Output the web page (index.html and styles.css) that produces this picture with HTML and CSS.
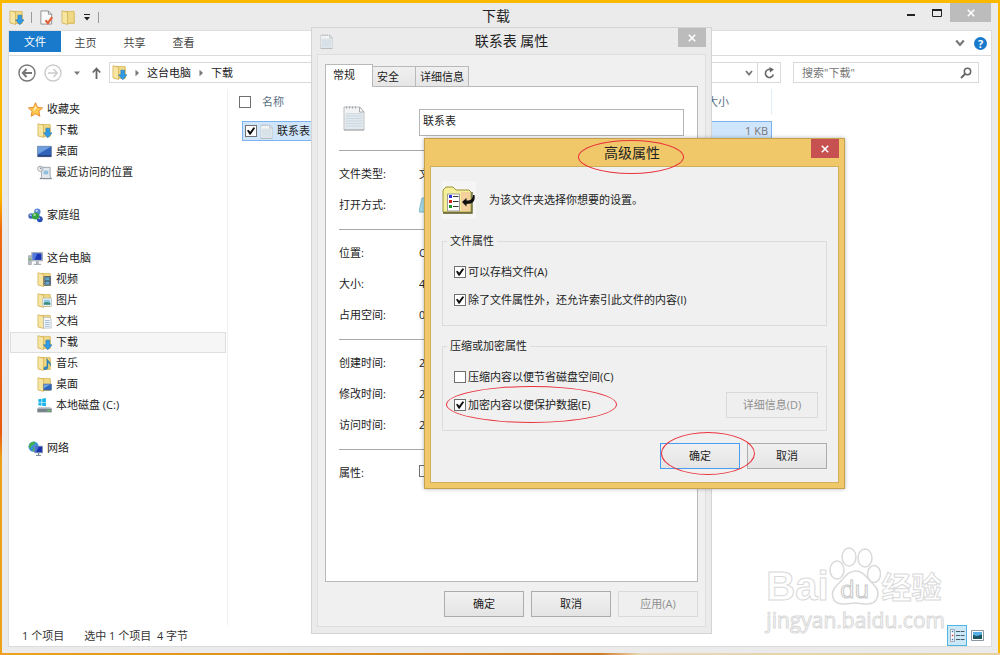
FILE: index.html
```html
<!DOCTYPE html>
<html lang="zh-CN">
<head>
  <meta charset="UTF-8">
  <meta name="viewport" content="width=device-width, initial-scale=1.0">
  <title>下载</title>
  <link rel="stylesheet" href="styles.css">
</head>
<body>

  <!-- Icons -->
  <svg class="icon-defs" width="0" height="0" aria-hidden="true">
    <symbol id="i-folder" viewBox="0 0 16 16">
      <path d="M1 1.500l5-.8v2h8.500v12H3L1 13.500z" fill="#e3c362"/>
      <path d="M6 1.500h8v12.500H6z" fill="#f0d985" stroke="#d0ae4c" stroke-width=".7"/>
      <path d="M1 .8l6 1.500v13.200l-6-1.800z" fill="#f7e5a2" stroke="#cda84a" stroke-width=".7"/>
    </symbol>
    <symbol id="i-download" viewBox="0 0 16 16">
      <use href="#i-folder"/>
      <path d="M9.500 5.500h4v5H16L11.500 15.800 7 10.500h2.500z" fill="#2f9be6" stroke="#1c6fb5" stroke-width=".6"/>
    </symbol>
    <symbol id="i-star" viewBox="0 0 16 16">
      <path d="M8 .8l2.200 4.900 5.300.6-3.900 3.600 1.100 5.300L8 12.500l-4.700 2.700 1.100-5.300L.5 6.300l5.300-.6z" fill="#ffc84d" stroke="#e8842a"/>
      <path d="M8 3l1.400 3.600L5 11z" fill="#ffe9a8"/>
    </symbol>
    <symbol id="i-desktop" viewBox="0 0 16 16">
      <path d="M.5 2.500h15v11H.5z" fill="#2f62b8" stroke="#7a8ca8"/>
      <path d="M1 3h14L1 11z" fill="#6c9ee0"/>
      <path d="M1 12h14v1.500H1z" fill="#1f3a70"/>
    </symbol>
    <symbol id="i-recent" viewBox="0 0 16 16">
      <path d="M4 2.500h10v9.500l1.500 2.500H3.500L5 12z" fill="#e4e8ec" stroke="#9aa2aa"/>
      <path d="M7 6h5v4H7z" fill="#8fc0de"/>
      <path d="M3 14.500h12.500" stroke="#7e868e"/>
      <circle cx="3.500" cy="4" r="2.800" fill="#f4f6f8" stroke="#9aa2aa"/>
      <path d="M3.500 2.300V4H5" fill="none" stroke="#5a6a7a" stroke-width=".8"/>
    </symbol>
    <symbol id="i-homegroup" viewBox="0 0 16 16">
      <path d="M3.500 8L10 4l3 7z" fill="none" stroke="#7d9ab8" stroke-width="1.500"/>
      <circle cx="10" cy="4" r="3.400" fill="#5a86d4"/>
      <circle cx="3.300" cy="8.500" r="3" fill="#3f68bd"/>
      <circle cx="12.600" cy="12" r="3.100" fill="#2a4eb4"/>
      <circle cx="8" cy="8.500" r="3.800" fill="#35a342"/>
      <circle cx="9.300" cy="3" r="1.200" fill="#c4dcf8"/>
      <circle cx="7" cy="7.200" r="1.300" fill="#a6e0a2"/>
      <circle cx="2.800" cy="7.600" r="1" fill="#b4d0f4"/>
      <circle cx="12" cy="11" r="1" fill="#9ab8ec"/>
    </symbol>
    <symbol id="i-pc" viewBox="0 0 16 16">
      <path d="M.5 5h3v9.500h-3z" fill="#b8bec4" stroke="#868e96" stroke-width=".6"/>
      <path d="M1 8h2v2H1z" fill="#5db653"/>
      <path d="M4 1.500h11.500v9H4z" fill="#c9d2da" stroke="#8f99a3" stroke-width=".8"/>
      <path d="M5 2.500h9.500v7H5z" fill="#1a36b4"/>
      <path d="M5 2.500h5L7 9.500H5z" fill="#5078e0"/>
      <path d="M8.500 11h3v2.500H14v1.500H6v-1.500h2.500z" fill="#a9b1b9"/>
    </symbol>
    <symbol id="i-video" viewBox="0 0 16 16">
      <use href="#i-folder"/>
      <path d="M7 4.500h8v10H7z" fill="#3d4852"/>
      <path d="M8.800 5.500h4.400v3.500H8.800zM8.800 10h4.400v3.500H8.800z" fill="#5fa6cc"/>
      <path d="M7.900 5v9.500M14.100 5v9.500" stroke="#d8dee2" stroke-width=".8" stroke-dasharray="1 1"/>
    </symbol>
    <symbol id="i-picture" viewBox="0 0 16 16">
      <use href="#i-folder"/>
      <path d="M6 5.500h9.500v8.500H6z" fill="#fff" stroke="#a5adb5" stroke-width=".7"/>
      <path d="M7.200 7h7v5.500h-7z" fill="#8cc7e6"/>
      <path d="M7.200 10.500l3-1 4 1v2h-7z" fill="#3c8a78"/>
    </symbol>
    <symbol id="i-document" viewBox="0 0 16 16">
      <use href="#i-folder"/>
      <path d="M7 3.500h6l2 2v9.500H7z" fill="#f7f9fb" stroke="#a5adb5" stroke-width=".7"/>
      <path d="M8.500 7h5M8.500 9h5M8.500 11h5M8.500 13h5" stroke="#84abd0" stroke-width=".8"/>
    </symbol>
    <symbol id="i-music" viewBox="0 0 16 16">
      <use href="#i-folder"/>
      <path d="M10.500 2.500c.5 3 4.500 3 4 8-.6-2-1.500-3-2.800-3.300V12c0 3-4.500 3.500-4.500 1.300 0-1.600 2-2.300 3.300-1.800z" fill="#2e8bc6" stroke="#1d6594" stroke-width=".4"/>
    </symbol>
    <symbol id="i-desk-folder" viewBox="0 0 16 16">
      <use href="#i-folder"/>
      <path d="M7 7.500h8.500v6.500H7z" fill="#2c63bc" stroke="#64788f" stroke-width=".7"/>
      <path d="M7.400 8h7l-7 4z" fill="#75a5e4"/>
    </symbol>
    <symbol id="i-disk" viewBox="0 0 16 16">
      <path d="M1.500 1.300L4.800.8v3.400H1.500zM5.500.7L9.500 0v4.200h-4zM1.500 4.900h3.300v3.400l-3.300-.5zM5.500 4.900h4v4l-4-.6z" fill="#18b4e8"/>
      <path d="M2 9.500h12l1.700 2H.3z" fill="#c4cad0"/>
      <path d="M.3 11.300h15.400v4H.3z" fill="#78828b"/>
      <path d="M11 12.700h3v1.400h-3z" fill="#5fd25a"/>
    </symbol>
    <symbol id="i-network" viewBox="0 0 16 16">
      <circle cx="6" cy="6" r="5.500" fill="#3c8fd6"/>
      <path d="M2 2.500c2-2 5-2 6-1.500L6 4 3.500 5 3 8 .7 6.500zM5.500 7L8 8v3l-3 0z" fill="#45b04c"/>
      <path d="M7 5.500h8.500v7H7z" fill="#1b33aa" stroke="#8e9cb0" stroke-width=".8"/>
      <path d="M7.500 6h4L8.500 12h-1z" fill="#4a74da"/>
      <path d="M10.500 12.800h1.500V15h2v1H8.500v-1h2z" fill="#7e8a98"/>
    </symbol>
    <symbol id="i-note" viewBox="0 0 22 26">
      <path d="M1 2h15.500L21 7v18H1z" fill="#f2f3f4" stroke="#b5b8ba" stroke-width=".9"/>
      <path d="M2 9h18v15H2z" fill="#dfe9ef"/>
      <path d="M3 8.500h16M3 11h16M3 13.500h16M3 16h16M3 18.500h16M3 21h16" stroke="#c4d0d7" stroke-width=".7"/>
      <path d="M3 2.500h12" stroke="#9da2a5" stroke-width="2.200" stroke-dasharray="1 2"/>
      <path d="M16.500 2v5H21z" fill="#fff" stroke="#9ca1a4" stroke-width=".9"/>
      <path d="M1 25h20" stroke="#a5a9ab"/>
    </symbol>
    <symbol id="i-check-doc" viewBox="0 0 14 16">
      <path d="M1 1h8l3.500 3.500V15H1z" fill="#fafafa" stroke="#8f8f8f"/>
      <path d="M9 1v3.500h3.500" fill="none" stroke="#8f8f8f"/>
      <path d="M6 11l2.500 3L13 7.500" fill="none" stroke="#e2633a" stroke-width="2.400"/>
    </symbol>
    <symbol id="i-close" viewBox="0 0 8 8">
      <path d="M.8.8l6.400 6.400M7.200.8L.8 7.200" stroke="currentColor" stroke-width="1.600"/>
    </symbol>
    <symbol id="i-chevron" viewBox="0 0 8 8">
      <path d="M1 2l3 3.500L7 2" fill="none" stroke="currentColor" stroke-width="1.800"/>
    </symbol>
    <symbol id="i-caret" viewBox="0 0 8 8">
      <path d="M1 2.500h6L4 6z" fill="currentColor"/>
    </symbol>
    <symbol id="i-crumb" viewBox="0 0 8 8">
      <path d="M2.500.8v6.400L6 4z" fill="currentColor"/>
    </symbol>
  </svg>

  <!-- Explorer Window -->
  <main class="window">
    <header class="titlebar">
      <div class="quick-access">
        <svg class="icon"><use href="#i-download"/></svg>
        <span class="separator"></span>
        <button class="tool" aria-label="属性"><svg class="icon"><use href="#i-check-doc"/></svg></button>
        <button class="tool" aria-label="新建文件夹"><svg class="icon"><use href="#i-folder"/></svg></button>
        <button class="tool" aria-label="自定义">
          <svg width="8" height="9" viewBox="0 0 8 9"><path d="M1 1.500h6" stroke="#222"/><path d="M1 4h6L4 7.500z" fill="#222"/></svg>
        </button>
        <span class="separator"></span>
      </div>
      <h1 class="window-title">下载</h1>
      <div class="window-buttons">
        <button class="min-max" aria-label="最小化"><svg width="10" height="10"><path d="M1 7h8" stroke="#222" stroke-width="2"/></svg></button>
        <button class="min-max" aria-label="最大化"><svg width="10" height="10"><path d="M.5 1.500h9v7h-9z" fill="none" stroke="#222"/><path d="M0 2h10" stroke="#222" stroke-width="2"/></svg></button>
        <button class="close close-wide" aria-label="关闭"><svg width="8" height="8"><use href="#i-close"/></svg></button>
      </div>
    </header>

    <div class="client">
      <nav class="ribbon">
        <button class="file-tab">文件</button>
        <button class="ribbon-tab">主页</button>
        <button class="ribbon-tab">共享</button>
        <button class="ribbon-tab">查看</button>
        <div class="ribbon-right">
          <button class="tool" aria-label="展开功能区"><svg width="10" height="10"><use href="#i-chevron"/></svg></button>
          <button class="help" aria-label="帮助">?</button>
        </div>
      </nav>

      <div class="toolbar">
        <button class="tool round" aria-label="后退">
          <svg width="18" height="18" viewBox="0 0 18 18" fill="none" stroke="#777"><circle cx="9" cy="9" r="8" stroke-width="1.400"/><path d="M14 9H5M8.500 5L4.800 9l3.700 4" stroke-width="2"/></svg>
        </button>
        <button class="tool round" aria-label="前进">
          <svg width="18" height="18" viewBox="0 0 18 18" fill="none" stroke="#ccc"><circle cx="9" cy="9" r="8" stroke-width="1.400"/><path d="M4 9h9M9.500 5l3.700 4-3.700 4" stroke-width="1.600"/></svg>
        </button>
        <button class="tool history" aria-label="历史记录"><svg width="8" height="8"><use href="#i-caret"/></svg></button>
        <button class="tool" aria-label="向上">
          <svg width="9" height="12" viewBox="0 0 9 12" fill="none" stroke="#666" stroke-width="1.800"><path d="M4.500 12V2M.8 5.500l3.700-4 3.700 4"/></svg>
        </button>
        <div class="address">
          <svg class="icon"><use href="#i-download"/></svg>
          <svg class="crumb-arrow"><use href="#i-crumb"/></svg>
          <a href="#">这台电脑</a>
          <svg class="crumb-arrow"><use href="#i-crumb"/></svg>
          <a href="#">下载</a>
          <button class="tool address-drop" aria-label="地址下拉"><svg width="8" height="8"><use href="#i-chevron"/></svg></button>
          <button class="tool refresh" aria-label="刷新">
            <svg width="11" height="12" viewBox="0 0 11 12"><path d="M9.300 7.500A4 4 0 1 1 7.500 3" fill="none" stroke="#666" stroke-width="1.600"/><path d="M5.500 0l4.500 2.500-4 3z" fill="#666"/></svg>
          </button>
        </div>
        <div class="search">
          <input type="text" aria-label="搜索" placeholder='搜索"下载"'>
          <svg width="12" height="12" viewBox="0 0 12 12" fill="none" stroke="#666"><circle cx="7.500" cy="4.500" r="3.200" stroke-width="1.500"/><path d="M5 7L1 11" stroke-width="2"/></svg>
        </div>
      </div>

      <div class="content">
        <nav class="nav-pane">
          <div class="nav-group">
            <a href="#"><svg class="icon"><use href="#i-star"/></svg>收藏夹</a>
            <a href="#" class="child"><svg class="icon"><use href="#i-download"/></svg>下载</a>
            <a href="#" class="child"><svg class="icon"><use href="#i-desktop"/></svg>桌面</a>
            <a href="#" class="child"><svg class="icon"><use href="#i-recent"/></svg>最近访问的位置</a>
          </div>
          <div class="nav-group">
            <a href="#"><svg class="icon"><use href="#i-homegroup"/></svg>家庭组</a>
          </div>
          <div class="nav-group">
            <a href="#"><svg class="icon"><use href="#i-pc"/></svg>这台电脑</a>
            <a href="#" class="child"><svg class="icon"><use href="#i-video"/></svg>视频</a>
            <a href="#" class="child"><svg class="icon"><use href="#i-picture"/></svg>图片</a>
            <a href="#" class="child"><svg class="icon"><use href="#i-document"/></svg>文档</a>
            <a href="#" class="child selected"><svg class="icon"><use href="#i-download"/></svg>下载</a>
            <a href="#" class="child"><svg class="icon"><use href="#i-music"/></svg>音乐</a>
            <a href="#" class="child"><svg class="icon"><use href="#i-desk-folder"/></svg>桌面</a>
            <a href="#" class="child"><svg class="icon"><use href="#i-disk"/></svg>本地磁盘 (C:)</a>
          </div>
          <div class="nav-group">
            <a href="#"><svg class="icon"><use href="#i-network"/></svg>网络</a>
          </div>
        </nav>

        <div class="file-pane">
          <table class="files">
            <thead>
              <tr>
                <th><span class="cell"><input type="checkbox" aria-label="全选">名称</span></th>
                <th class="size">大小</th>
              </tr>
            </thead>
            <tbody>
              <tr>
                <td><span class="cell"><input type="checkbox" aria-label="联系表" checked><svg class="icon"><use href="#i-note"/></svg>联系表</span></td>
                <td class="size">1 KB</td>
              </tr>
            </tbody>
          </table>
        </div>
      </div>

      <footer class="status">
        <span>1 个项目</span>
        <span>选中 1 个项目&nbsp; 4 字节</span>
        <div class="views">
          <button class="view active" aria-label="详细信息">
            <svg width="15" height="13" viewBox="0 0 15 13"><path d="M.5.5h4v12h-4z" fill="#fff" stroke="#8a98a4" stroke-width=".8"/><path d="M1.800 2.500h1.500M1.800 10.500h1.500" stroke="#3c7fc0" stroke-width="1.500"/><path d="M1.800 6.500h1.500" stroke="#d03c3c" stroke-width="1.500"/><path d="M6 2.500h8.500M6 6.500h8.500M6 10.500h8.500" stroke="#4c5c66" stroke-dasharray="4 .6"/></svg>
          </button>
          <button class="view" aria-label="大图标">
            <svg width="13" height="11" viewBox="0 0 13 11"><path d="M.5.5h12v10H.5z" fill="#fff" stroke="#8a98a4"/><path d="M2 2h9v7H2z" fill="#57aee6"/><path d="M2 5l4 1 5-1.500V9H2z" fill="#1d5560"/></svg>
          </button>
        </div>
      </footer>
    </div>
  </main>

  <!-- Watermark -->
  <div class="watermark">
    <div class="brand">
      <span class="bai">Bai</span>
      <span class="paw">
        <svg width="52" height="58" viewBox="0 0 52 58" fill="#fff" stroke="#d9d9d9" stroke-width="1.500">
          <ellipse cx="8" cy="23" rx="7" ry="9"/>
          <ellipse cx="20" cy="10" rx="7" ry="9"/>
          <ellipse cx="36" cy="11" rx="7" ry="9"/>
          <ellipse cx="45" cy="27" rx="6.500" ry="8.500"/>
          <path d="M27 24c8 0 11 8 17 13 9 8 5 20-6 20-5 0-8-1-12-1s-7 1-12 1C3 57 0 46 8 38c7-6 10-14 19-14z"/>
        </svg>
        <span class="du">du</span>
      </span>
      <span class="jingyan">经验</span>
    </div>
    <div class="site">jingyan.baidu.com</div>
  </div>

  <!-- File Properties Dialog -->
  <section class="dialog properties">
    <header class="dialog-title">
      <svg class="icon"><use href="#i-note"/></svg>
      <h2>联系表 属性</h2>
      <button class="close" aria-label="关闭"><svg width="8" height="8"><use href="#i-close"/></svg></button>
    </header>
    <div class="dialog-body">
      <div class="tabs">
        <button class="tab active">常规</button>
        <button class="tab">安全</button>
        <button class="tab">详细信息</button>
      </div>
      <div class="tab-panel">
        <div class="file-name">
          <svg width="22" height="26"><use href="#i-note"/></svg>
          <input type="text" value="联系表" aria-label="文件名">
        </div>
        <dl class="details">
          <div><dt>文件类型:</dt><dd>文本文档</dd></div>
          <div><dt>打开方式:</dt><dd><svg width="14" height="16" viewBox="0 0 14 16"><path d="M3 1h11l-2 14H0z" fill="#a8dcea" stroke="#7fb8c8"/></svg></dd></div>
        </dl>
        <dl class="details">
          <div><dt>位置:</dt><dd>C:\</dd></div>
          <div><dt>大小:</dt><dd>4 字节</dd></div>
          <div><dt>占用空间:</dt><dd>0 字节</dd></div>
        </dl>
        <dl class="details">
          <div><dt>创建时间:</dt><dd>2014</dd></div>
          <div><dt>修改时间:</dt><dd>2014</dd></div>
          <div><dt>访问时间:</dt><dd>2014</dd></div>
        </dl>
        <dl class="details">
          <div><dt>属性:</dt><dd><input type="checkbox" aria-label="只读"></dd></div>
        </dl>
      </div>
      <div class="dialog-buttons">
        <button class="btn">确定</button>
        <button class="btn">取消</button>
        <button class="btn" disabled>应用(A)</button>
      </div>
    </div>
  </section>

  <!-- Advanced Attributes Dialog -->
  <section class="dialog advanced">
    <header class="dialog-title">
      <h2>高级属性</h2>
      <button class="close" aria-label="关闭"><svg width="8" height="8"><use href="#i-close"/></svg></button>
    </header>
    <div class="dialog-body">
      <div class="intro">
        <svg width="34" height="38" viewBox="0 0 34 38">
          <path d="M0 0h34v38H0z" fill="#f5f5f5"/>
          <path d="M1 31V9l3-3h7l3 3h13l2 2v20z" fill="#f5ef9c" stroke="#9a9238"/>
          <path d="M19 11h9v19h-9z" fill="#f4d09c"/>
          <path d="M1 32h29V11" fill="none" stroke="#5c5820" stroke-width="1.300"/>
          <path d="M5.500 13h12v17h-12z" fill="#fff" stroke="#999"/>
          <path d="M7 14h3v3H7z" fill="#2a35dc"/><path d="M7 19h3v3H7z" fill="#d22020"/><path d="M7 24h3v3H7z" fill="#1c9a30"/>
          <path d="M11 15.500h5.500M11 20.500h5.500M11 25.500h5.500" stroke="#333"/>
          <path d="M20 21l4.500-4v2.500c5 0 6-1.500 6.500-5.500h1.500c1 6-1.500 9-8 9v2.500z" fill="#111"/>
        </svg>
        <p>为该文件夹选择你想要的设置。</p>
      </div>
      <fieldset>
        <legend>文件属性</legend>
        <label class="option"><input type="checkbox" checked>可以存档文件(A)</label>
        <label class="option"><input type="checkbox" checked>除了文件属性外，还允许索引此文件的内容(I)</label>
      </fieldset>
      <fieldset>
        <legend>压缩或加密属性</legend>
        <label class="option"><input type="checkbox">压缩内容以便节省磁盘空间(C)</label>
        <div class="option-row">
          <label class="option"><input type="checkbox" checked>加密内容以便保护数据(E)</label>
          <button class="btn btn-wide" disabled>详细信息(D)</button>
        </div>
      </fieldset>
      <div class="dialog-buttons">
        <button class="btn default">确定</button>
        <button class="btn">取消</button>
      </div>
    </div>
    <span class="mark mark-title"></span>
    <span class="mark mark-encrypt"></span>
    <span class="mark mark-ok"></span>
  </section>

</body>
</html>
```

FILE: styles.css
```css
/* General Styles */
* {
  box-sizing: border-box;
}

body {
  margin: 0;
  height: 100vh;
  padding: 3px 2px 2px;
  display: flex;
  position: relative;
  overflow: hidden;
  background: linear-gradient(#fdb900 0, #fdb900 30%, #f06a10 35%, #e85a10 66%, #eda018 70%, #eda018 100%) left / 2px 100% no-repeat,
    linear-gradient(90deg, #f0a020, #d07a20 60%, #e8d8b8 64%, #e8d0a0) bottom / 100% 2px no-repeat,
    #fdb900;
  font-family: "Open Sans", "Noto Sans CJK SC", sans-serif;
  font-size: 11px;
  line-height: 16px;
  color: #222;
}

h1, h2, p, dl, dd {
  margin: 0;
  font-weight: normal;
}

button, input {
  font: inherit;
  color: inherit;
  margin: 0;
}

button {
  padding: 0;
  border: none;
  background: none;
  white-space: nowrap;
}

a {
  color: inherit;
  text-decoration: none;
}

svg {
  display: block;
  flex: none;
}

.icon-defs {
  position: absolute;
}

.icon {
  width: 15px;
  height: 15px;
}

input[type="checkbox"] {
  appearance: none;
  flex: none;
  width: 12px;
  height: 12px;
  border: 1px solid #707070;
  background: #fff;
}

input[type="checkbox"]:checked::before {
  content: "";
  display: block;
  width: 10px;
  height: 10px;
  background: #111;
  clip-path: polygon(10% 45%, 25% 38%, 42% 58%, 75% 12%, 92% 20%, 46% 88%, 36% 88%);
}

/* Explorer Window */
.window {
  flex: 1;
  display: flex;
  flex-direction: column;
  padding: 0 7px 7px;
  background: #ebebeb;
}

.titlebar {
  display: grid;
  grid-template-columns: 1fr auto 1fr;
  height: 28px;
}

.quick-access {
  display: flex;
  align-items: center;
  gap: 7px;
}

.separator {
  width: 1px;
  height: 11px;
  background: #999;
}

.tool {
  display: flex;
  align-items: center;
  justify-content: center;
  color: #777;
}

.window-title {
  padding-right: 8px;
  font-size: 14px;
  line-height: 26px;
}

.window-buttons {
  display: flex;
  justify-content: flex-end;
  align-items: flex-start;
}

.min-max {
  width: 26px;
  height: 20px;
  display: flex;
  align-items: center;
  justify-content: center;
}

.close {
  width: 28px;
  height: 19px;
  display: flex;
  align-items: center;
  justify-content: center;
  background: #bcbcbc;
  color: #fff;
}

.close-wide {
  width: 41px;
}

.client {
  flex: 1;
  display: flex;
  flex-direction: column;
  background: #fff;
  outline: 1px solid #dcdcdc;
}

/* Ribbon */
.ribbon {
  display: flex;
  height: 25px;
  border-bottom: 1px solid #dcdcdc;
  color: #444;
}

.file-tab {
  width: 52px;
  height: 21px;
  background: #1979ca;
  color: #fff;
}

.ribbon-tab {
  width: 49px;
}

.ribbon-right {
  margin-left: auto;
  padding-right: 4px;
  display: flex;
  align-items: center;
  gap: 9px;
}

.help {
  width: 13px;
  height: 13px;
  border-radius: 50%;
  background: #1979ca;
  color: #fff;
  font-weight: bold;
  line-height: 13px;
}

/* Address Bar */
.toolbar {
  display: flex;
  align-items: center;
  gap: 8px;
  height: 33px;
  padding: 0 12px 0 9px;
}

.history {
  width: 14px;
}

.address {
  flex: 1;
  height: 21px;
  display: flex;
  align-items: center;
  padding-left: 2px;
  margin-right: 4px;
  border: 1px solid #d9d9d9;
}

.crumb-arrow {
  width: 8px;
  height: 8px;
  margin: 0 6px;
  color: #777;
}

.address-drop {
  margin-left: auto;
  padding: 0 4px;
}

.refresh {
  width: 23px;
  height: 19px;
  border-left: 1px solid #d9d9d9;
}

.search {
  width: 186px;
  height: 21px;
  display: flex;
  align-items: center;
  padding: 0 6px 0 8px;
  border: 1px solid #d9d9d9;
}

.search input {
  flex: 1;
  min-width: 0;
  padding: 0;
  border: none;
  outline: none;
}

.search input::placeholder {
  color: #777;
}

/* Navigation Pane */
.content {
  flex: 1;
  display: flex;
}

.nav-pane {
  width: 219px;
  padding: 10px 1px 0;
  border-right: 1px solid #f0f0f0;
}

.nav-group {
  margin-bottom: 22px;
}

.nav-group a {
  height: 21px;
  display: flex;
  align-items: center;
  gap: 4px;
  padding: 0 0 1px 17px;
  border: 1px solid transparent;
}

.nav-group .child {
  padding-left: 26px;
}

.nav-group .selected {
  background: #f6f6f6;
  border-color: #dedede;
}

/* File List */
.file-pane {
  flex: 1;
  padding-left: 14px;
}

.files {
  width: 530px;
  border-collapse: separate;
  border-spacing: 0;
}

.files th,
.files td {
  padding: 0;
  text-align: left;
  font-weight: normal;
}

.files th {
  height: 26px;
  color: #5b7085;
}

.files .cell {
  display: flex;
  align-items: center;
}

.files th input {
  margin: 0 11px 0 -3px;
}

.files thead::after {
  content: "";
  display: block;
  height: 6px;
}

.files td {
  height: 20px;
  background: #cfe5fc;
  border: 1px solid #7db2ec;
  border-width: 1px 0;
}

.files td:first-child {
  border-left-width: 1px;
  padding-left: 2px;
}

.files td input {
  margin-right: 2px;
}

.files td .icon {
  margin-right: 3px;
}

.files .size {
  width: 65px;
}

.files th.size {
  border-right: 1px solid #e4ecf4;
}

.files td.size {
  padding-right: 3px;
  border-right-width: 1px;
  text-align: right;
  color: #777;
}

/* Status Bar */
.status {
  display: flex;
  align-items: center;
  gap: 20px;
  height: 21px;
  padding-left: 13px;
  color: #333;
}

.views {
  display: flex;
  margin-left: auto;
  padding-right: 4px;
}

.view {
  width: 20px;
  height: 21px;
  display: flex;
  align-items: center;
  justify-content: center;
}

.view.active {
  background: #cbe8f6;
  border: 1px solid #4fb4e4;
}

/* Watermark */
.watermark {
  position: absolute;
  right: 55px;
  bottom: 20px;
  color: #fff;
  -webkit-text-stroke: 1px #d9d9d9;
}

.brand {
  display: flex;
  align-items: flex-end;
}

.bai {
  font-family: "Liberation Sans", sans-serif;
  font-size: 40px;
  font-weight: bold;
  line-height: 38px;
}

.paw {
  position: relative;
}

.du {
  position: absolute;
  left: 0;
  right: 0;
  bottom: 2px;
  text-align: center;
  font-size: 24px;
  line-height: 28px;
  -webkit-text-stroke-color: #c8c8c8;
}

.jingyan {
  margin-left: 1px;
  font-size: 30px;
  font-weight: bold;
  line-height: 36px;
}

.site {
  font-size: 21px;
  line-height: 30px;
}

/* Dialogs */
.dialog {
  position: absolute;
  display: flex;
  flex-direction: column;
}

.dialog-title {
  position: relative;
  display: flex;
  align-items: center;
  justify-content: center;
  height: 27px;
}

.dialog-title h2 {
  font-size: 14px;
}

.dialog-title .icon {
  position: absolute;
  left: 2px;
}

.dialog-title .close {
  position: absolute;
  top: 0;
  right: 0;
}

.dialog-body {
  flex: 1;
  display: flex;
  flex-direction: column;
  background: #f0f0f0;
}

.dialog-buttons {
  display: flex;
  justify-content: flex-end;
  gap: 7px;
}

.btn {
  width: 80px;
  height: 26px;
  border: 1px solid #acacac;
  background: linear-gradient(#f1f1f1, #e4e4e4);
}

.btn.default {
  border-color: #4a9cf0;
}

.btn:disabled {
  border-color: #d9d9d9;
  background: #efefef;
  color: #8f8f8f;
}

.btn-wide {
  width: 92px;
}

/* Properties Dialog */
.properties {
  left: 311px;
  top: 27px;
  width: 401px;
  padding: 0 5px 6px;
  border: 1px solid #d4d4d4;
  background: #ebebeb;
}

.properties .dialog-title {
  height: 26px;
}

.properties .dialog-body {
  padding: 9px 7px;
  border: 1px solid #dedede;
}

.tabs {
  display: flex;
  align-items: flex-end;
}

.tab {
  height: 20px;
  padding: 0 4px;
  border: 1px solid #b9b9b9;
  border-width: 1px 1px 0 0;
  background: linear-gradient(#f0f0f0, #e6e6e6);
}

.tab:nth-child(2) {
  padding-right: 16px;
}

.tab.active {
  height: 23px;
  margin-bottom: -1px;
  padding: 0 17px 3px 7px;
  border-left-width: 1px;
  background: #fff;
  z-index: 1;
}

.tab-panel {
  height: 496px;
  padding: 18px 13px;
  border: 1px solid #b9b9b9;
  background: #fff;
}

.file-name {
  display: flex;
  justify-content: space-between;
  padding-left: 4px;
  margin-bottom: 14px;
}

.file-name input {
  width: 265px;
  height: 27px;
  margin-top: 4px;
  padding: 0 3px 6px;
  border: 1px solid #b5b5b5;
}

.details {
  padding: 7px 0 9px;
  border-top: 1px solid #a8a8a8;
}

.details div {
  display: flex;
  align-items: center;
  height: 31px;
}

.details dt {
  width: 80px;
}

.properties .dialog-buttons {
  padding-top: 9px;
}

/* Advanced Attributes Dialog */
.advanced {
  left: 424px;
  top: 138px;
  width: 421px;
  padding: 0 5px 5px;
  border: 1px solid #c6a24e;
  background: #f0c869;
  box-shadow: 0 0 4px rgba(0, 0, 0, 0.3);
}

.advanced .dialog-title h2 {
  padding-right: 5px;
}

.advanced .dialog-title .close {
  background: #c75050;
}

.advanced .dialog-body {
  padding: 14px 11px 13px;
  border: 1px solid #cfae5c;
}

.intro {
  display: flex;
  align-items: center;
  gap: 13px;
  margin-bottom: 14px;
}

fieldset {
  display: flex;
  flex-direction: column;
  min-height: 93px;
  margin: 0 0 12px;
  padding: 9px 8px 0 11px;
  border: 1px solid #dcdcdc;
}

legend {
  margin-left: -7px;
  padding: 0 3px;
}

.option {
  display: flex;
  align-items: center;
  gap: 2px;
  height: 28px;
}

.option-row {
  display: flex;
  align-items: center;
  justify-content: space-between;
}

/* Red Annotations */
.mark {
  position: absolute;
  border: 1px solid #e8323c;
  border-radius: 50%;
  pointer-events: none;
}

.mark-title {
  left: 153px;
  top: 1px;
  width: 106px;
  height: 34px;
}

.mark-encrypt {
  left: 21px;
  top: 247px;
  width: 171px;
  height: 37px;
}

.mark-ok {
  left: 236px;
  top: 293px;
  width: 94px;
  height: 43px;
}
```
